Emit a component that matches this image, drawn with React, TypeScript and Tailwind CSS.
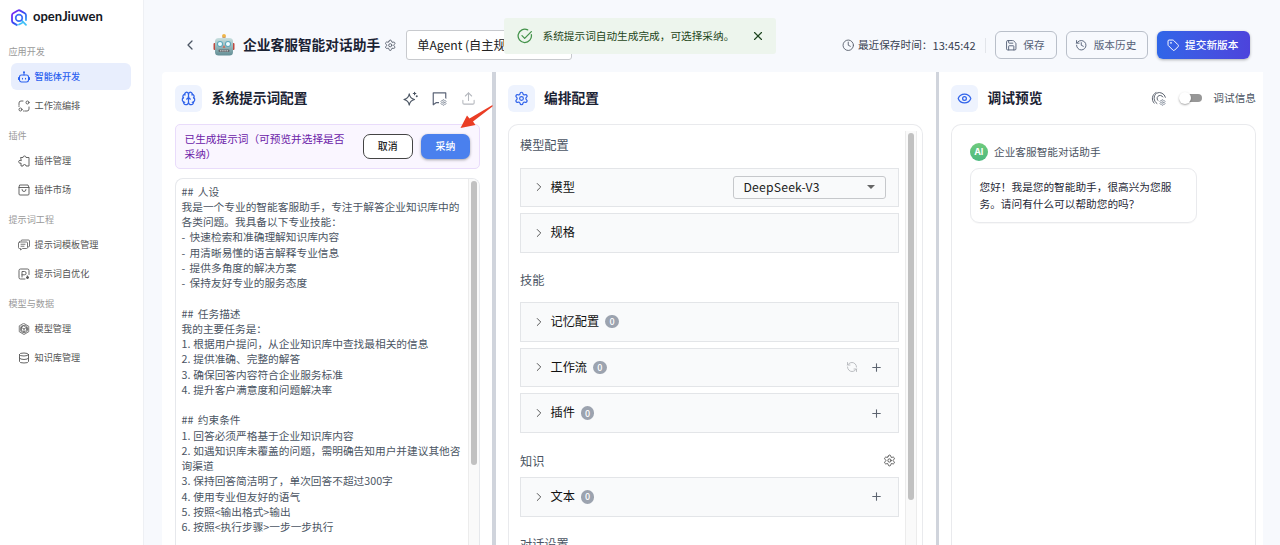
import type { ReactNode } from 'react';
import {
  Brain, ChevronLeft, ChevronRight, Clock, Database, Eye, History, Plus, RefreshCw, Save, Settings, Tag, Upload, X,
} from 'lucide-react';

const line = { fill: 'none', stroke: 'currentColor', strokeLinecap: 'round', strokeLinejoin: 'round' } as const;

function Logo() {
  return (
    <svg viewBox="0 0 18 18" className="size-[18px] shrink-0">
      <defs>
        <linearGradient id="lg" x1="0" y1="0" x2="1" y2="1">
          <stop offset="0" stopColor="#8a22f5" />
          <stop offset=".5" stopColor="#3548f3" />
          <stop offset="1" stopColor="#35c8f5" />
        </linearGradient>
      </defs>
      <path d="M7.500 16.400 L3.200 13.900 Q2 13.200 2 11.800 V6.200 Q2 4.900 3.200 4.200 L7.900 1.600 Q9 .9 10.200 1.600 L14.800 4.200 Q16 4.900 16 6.200 V11.800" fill="none" stroke="url(#lg)" strokeWidth="1.800" />
      <path d="M11.600 11.400 L16 15.800 M9 15.500 L12 14" fill="none" stroke="#3fc0f7" strokeWidth="1.700" strokeLinecap="round" />
      <circle cx="9" cy="8.900" r="3.300" fill="none" stroke="#3f6ff5" strokeWidth="1.700" />
    </svg>
  );
}

function Robot() {
  return (
    <svg viewBox="0 0 24 24" className="size-6 shrink-0">
      <defs>
        <linearGradient id="rb" x1="0" y1="0" x2="0" y2="1">
          <stop offset="0" stopColor="#c9e0e0" />
          <stop offset="1" stopColor="#628e95" />
        </linearGradient>
      </defs>
      <rect x="1.500" y="10" width="3" height="7" rx="1" fill="#c0483f" />
      <rect x="19.500" y="10" width="3" height="7" rx="1" fill="#c0483f" />
      <rect x="10.500" y="3" width="3" height="3" fill="#a08795" />
      <circle cx="12" cy="2.800" r="1.900" fill="#f0b547" />
      <rect x="3" y="5" width="18" height="17.500" rx="3.500" fill="url(#rb)" />
      <circle cx="8" cy="11" r="3" fill="#5aa7bb" />
      <circle cx="16" cy="11" r="3" fill="#5aa7bb" />
      <circle cx="8" cy="11" r="2" fill="#f0fdff" />
      <circle cx="16" cy="11" r="2" fill="#f0fdff" />
      <path d="M12 12 L13.300 14.700 H10.700 Z" fill="#d0604f" />
      <rect x="6.500" y="16.500" width="11" height="2.600" rx="1" fill="#64696d" />
      <path d="M8 17.800 H16" stroke="#dcdede" strokeWidth="1" strokeDasharray="1.400 .8" />
    </svg>
  );
}

function FlowIcon() {
  return (
    <svg viewBox="0 0 24 24" className="size-3" {...line} strokeWidth="1.800">
      <circle cx="19" cy="5" r="3" /><circle cx="5" cy="19" r="3" />
      <path d="M2 10V6q0-4 4-4h4M22 14v4q0 4-4 4h-4M2 13v-1M12 22h-1" />
    </svg>
  );
}
function RobotHead() {
  return (
    <svg viewBox="0 0 24 24" className="size-3" {...line} strokeWidth="2.100">
      <rect x="3" y="8" width="18" height="14" rx="4" />
      <path d="M12 8V3M1 13v4M23 13v4M9 14.500v1.500M15 14.500v1.500" /><circle cx="12" cy="2.600" r="1" />
    </svg>
  );
}
function PluginIcon() {
  return (
    <svg viewBox="0 0 24 24" className="size-3" {...line} strokeWidth="1.800">
      <path d="M6 5h4a3 3 0 0 1 6 0h6v17h-6a3 3 0 0 0-6 0H6v-6a3 3 0 1 1 0-5z" />
    </svg>
  );
}
function BagIcon() {
  return (
    <svg viewBox="0 0 24 24" className="size-3" {...line} strokeWidth="1.800">
      <path d="M4 2h16l2 5v13q0 2-2 2H4q-2 0-2-2V7zM2 7h20M8 11q0 4 4 4t4-4" />
    </svg>
  );
}
function TemplateIcon() {
  return (
    <svg viewBox="0 0 24 24" className="size-3" {...line} strokeWidth="1.600">
      <path d="M6 4q0-2 2-2h13q2 0 2 2v10q0 2-2 2M3 6h14q2 0 2 2v9q0 2-2 2H9l-4 3v-3H3q-2 0-2-2V8q0-2 2-2zM6 10.500h8M6 14.500h6" />
    </svg>
  );
}
function PromptIcon() {
  return (
    <svg viewBox="0 0 24 24" className="size-3" {...line} strokeWidth="1.800">
      <path d="M22 13V5q0-3-3-3H5Q2 2 2 5v14q0 3 3 3h9M8 18V7h5a3.300 3.300 0 0 1 0 6.600H8" />
      <path d="M19 16l1 2 2 1-2 1-1 2-1-2-2-1 2-1z" fill="currentColor" />
    </svg>
  );
}
function ModelIcon() {
  return (
    <svg viewBox="0 0 24 24" className="size-3" {...line} strokeWidth="1.500">
      <path d="M12 1l9.500 5.500v11L12 23l-9.500-5.500v-11z" />
      <path d="M12 6l5 3v6l-5 3-5-3V9zM12 12v6M12 12l5-3M12 12L7 9" />
      <circle cx="12" cy="12" r="7.500" />
    </svg>
  );
}
function GearDot() {
  return (
    <span className="absolute -right-px -bottom-px flex size-[9px] items-center justify-center rounded-full bg-white text-[#8b93a1]">
      <Settings className="size-[7px]" strokeWidth={3} />
    </span>
  );
}

const nav: { title: string; items: { label: string; icon: ReactNode; active?: boolean }[] }[] = [
  { title: '应用开发', items: [{ label: '智能体开发', icon: <RobotHead />, active: true }, { label: '工作流编排', icon: <FlowIcon /> }] },
  { title: '插件', items: [{ label: '插件管理', icon: <PluginIcon /> }, { label: '插件市场', icon: <BagIcon /> }] },
  { title: '提示词工程', items: [{ label: '提示词模板管理', icon: <TemplateIcon /> }, { label: '提示词自优化', icon: <PromptIcon /> }] },
  { title: '模型与数据', items: [{ label: '模型管理', icon: <ModelIcon /> }, { label: '知识库管理', icon: <Database className="size-3" strokeWidth={1.8} /> }] },
];

function Sidebar() {
  return (
    <aside className="flex w-[144px] shrink-0 flex-col border-r border-[#eef0f4] bg-white">
      <div className="flex h-[42px] items-center gap-[5px] pb-[7px] pl-[10px]">
        <Logo />
        <span className="pb-px font-[Lato] text-[13px] font-bold text-[#15181e]">openJiuwen</span>
      </div>
      {nav.map((s) => (
        <div key={s.title} className="h-[84px]">
          <div className="flex h-[20px] items-center pl-[8.500px] text-[9.100px] text-[#9a9a9a]">{s.title}</div>
          <div className="mt-[1.300px] flex flex-col gap-[2px] pr-[12px] pl-[11px]">
            {s.items.map((i) => (
              <div
                key={i.label}
                className={`flex h-[27px] items-center gap-[5px] rounded-[6px] pl-[6.500px] text-[9.150px] ${i.active ? 'bg-[#e8eefd] font-medium text-[#2b62f0]' : 'text-[#555]'}`}
              >
                {i.icon}
                <span>{i.label}</span>
              </div>
            ))}
          </div>
        </div>
      ))}
    </aside>
  );
}

function Header() {
  return (
    <header className="flex h-[72px] shrink-0 items-center pt-[18px] pr-[30px] pl-[38px]">
      <ChevronLeft className="size-4 text-[#4b5563]" strokeWidth={1.9} />
      <div className="ml-[13.500px] flex items-center pb-px">
        <Robot />
        <h1 className="ml-[7.500px] text-[13.720px] font-bold text-[#1a2233]">企业客服智能对话助手</h1>
        <Settings className="mt-px ml-[3.500px] size-[12.500px] text-[#5f6673]" strokeWidth={1.9} />
      </div>
      <div className="ml-[10px] flex h-[30px] w-[166px] items-center overflow-hidden rounded-[3px] border border-[#c8cace] bg-white pl-[10px] text-[12.200px] whitespace-nowrap text-[#222]">
        单Agent (自主规划)
      </div>
      <div className="ml-auto flex items-center">
        <Clock className="size-[12.500px] text-[#5d6470]" strokeWidth={1.8} />
        <span className="ml-[3px] text-[10.670px] text-[#374151]">最近保存时间：</span>
        <span className="w-[43.500px] text-[11.100px] text-[#374151]">13:45:42</span>
        <div className="mr-[9px] ml-[9px] h-[15px] w-px bg-[#e2e5ea]" />
        <button className="flex h-[28px] w-[61.500px] items-center justify-center gap-[6px] rounded-[6px] border border-[#b9bfc9] pr-[2px] text-[10.670px] text-[#566178]">
          <Save className="size-[12.500px]" strokeWidth={1.8} />保存
        </button>
        <button className="ml-[9px] flex h-[28px] w-[82.500px] items-center justify-center gap-[6px] rounded-[6px] border border-[#b9bfc9] pr-[2px] text-[10.670px] text-[#566178]">
          <History className="size-[12.500px]" strokeWidth={1.8} />版本历史
        </button>
        <button className="ml-[9px] flex h-[28.500px] w-[93px] items-center justify-center gap-[6px] rounded-[6px] bg-linear-to-r from-[#2f66e8] to-[#4c43dc] pr-[2px] text-[10.670px] font-medium text-white shadow-[0_1px_3px_rgba(0,0,0,0.3)]">
          <Tag className="size-[12.500px]" strokeWidth={1.9} />提交新版本
        </button>
      </div>
    </header>
  );
}

function PanelHead({ icon, title, children }: { icon: ReactNode; title: string; children?: ReactNode }) {
  return (
    <div className="flex h-[52px] shrink-0 items-center">
      <div className="flex size-[27px] items-center justify-center rounded-[6px] bg-[#eef3fe] text-[#2f62ea]">{icon}</div>
      <h2 className="ml-[9.500px] pb-px text-[13.720px] font-bold text-[#1a2233]">{title}</h2>
      <div className="ml-auto flex items-center">{children}</div>
    </div>
  );
}

const prompt = [
  '## 人设',
  '我是一个专业的智能客服助手，专注于解答企业知识库中的',
  '各类问题。我具备以下专业技能：',
  '- 快速检索和准确理解知识库内容',
  '- 用清晰易懂的语言解释专业信息',
  '- 提供多角度的解决方案',
  '- 保持友好专业的服务态度',
  '',
  '## 任务描述',
  '我的主要任务是：',
  '1. 根据用户提问，从企业知识库中查找最相关的信息',
  '2. 提供准确、完整的解答',
  '3. 确保回答内容符合企业服务标准',
  '4. 提升客户满意度和问题解决率',
  '',
  '## 约束条件',
  '1. 回答必须严格基于企业知识库内容',
  '2. 如遇知识库未覆盖的问题，需明确告知用户并建议其他咨',
  '询渠道',
  '3. 保持回答简洁明了，单次回答不超过300字',
  '4. 使用专业但友好的语气',
  '5. 按照<输出格式>输出',
  '6. 按照<执行步骤>一步一步执行',
];

function PromptPanel() {
  return (
    <section className="flex w-[330px] shrink-0 flex-col rounded-tl-[4px] bg-white pr-[12px] pl-[13px]">
      <PanelHead icon={<Brain className="size-[15px]" strokeWidth={2} />} title="系统提示词配置">
        <svg viewBox="0 0 24 24" className="size-[15px] text-[#4b5563]" {...line} strokeWidth="1.800">
          <path d="M10 4.500q1.200 7.500 8.500 9-7.300 1.500-8.500 9-1.200-7.500-8.500-9 7.300-1.500 8.500-9zM18.500 2v4M16.500 4h4" />
          <circle cx="22" cy="8.500" r=".7" />
        </svg>
        <div className="relative ml-[14px] size-[15px] text-[#5b6477]">
          <svg viewBox="0 0 24 24" className="size-[15px]" {...line} strokeWidth="1.900">
            <path d="M11 18.500H7l-5 3.500V3h20v9" />
          </svg>
          <GearDot />
        </div>
        <Upload className="mr-[4px] ml-[14px] size-[15px] text-[#b5b8be]" strokeWidth={1.7} />
      </PanelHead>
      <div className="flex h-[44.500px] shrink-0 items-center rounded-[5px] border border-[#e9dcfb] bg-[#faf6ff] pr-[9px] pl-[8.500px]">
        <p className="w-[170px] text-[10.670px] leading-[15.250px] text-[#6b21a8]">已生成提示词（可预览并选择是否<br />采纳）</p>
        <button className="ml-auto h-[24.500px] w-[49.500px] rounded-[7px] border border-[#444] bg-white text-[9.900px] font-medium text-[#222]">取消</button>
        <button className="ml-[8.500px] h-[24.500px] w-[49px] rounded-[7px] bg-[#4a80ee] text-[9.900px] font-medium text-white shadow-[0_1px_3px_rgba(0,0,0,0.35)]">采纳</button>
      </div>
      <div className="mt-[9px] flex min-h-0 flex-1 overflow-hidden rounded-t-[8px] border border-b-0 border-[#e6e8ec]">
        <div className="flex-1 pt-[5px] pl-[5.500px] text-[10.690px] leading-[15.260px] whitespace-pre text-[#4b5563]">
          {prompt.map((text, i) => (
            <div key={i} className={`h-[15.260px] ${/^[#-]/.test(text) ? '[word-spacing:2px]' : '[word-spacing:0.500px]'}`}>{text}</div>
          ))}
        </div>
        <div className="flex w-[11.500px] shrink-0 justify-center border-l border-[#ececec] bg-[#fafafa] pt-[2px]">
          <div className="h-[284px] w-[6px] rounded-full bg-[#c1c1c1]" />
        </div>
      </div>
    </section>
  );
}

function Row({ title, count, children }: { title: string; count?: boolean; children?: ReactNode }) {
  return (
    <div className="flex h-[39.700px] items-center border border-[#e3e5e8] bg-[#f9fafb] pr-[12px] pl-[10.500px]">
      <ChevronRight className="size-[14px] text-[#555]" strokeWidth={1.7} />
      <span className="ml-[5px] pb-px text-[12.200px] text-[#111]">{title}</span>
      {count && <span className="ml-[6px] flex size-[13.500px] items-center justify-center rounded-full bg-[#9ca3af] text-[9px] leading-none font-medium text-white">0</span>}
      <div className="ml-auto flex items-center gap-[12px]">{children}</div>
    </div>
  );
}

const Add = () => <Plus className="mr-[3px] size-[13px] text-[#5d6470]" strokeWidth={2} />;

function Label({ children }: { children: ReactNode }) {
  return <h3 className="flex h-[20px] items-center justify-between text-[12.200px] text-[#4b5563]">{children}</h3>;
}

function ConfigPanel() {
  return (
    <section className="flex w-[440px] shrink-0 flex-col bg-white pr-[13px] pl-[12px]">
      <PanelHead icon={<Settings className="size-[15px]" strokeWidth={1.9} />} title="编排配置" />
      <div className="flex min-h-0 flex-1 overflow-hidden rounded-t-[10px] border border-b-0 border-[#e9eaed] pt-[6px]">
        <div className="w-[396.500px] pt-[4.500px] pr-[6.500px] pl-[11.500px]">
          <Label>模型配置</Label>
          <div className="mt-[12px] flex flex-col gap-[6px]">
            <Row title="模型">
              <div className="flex h-[23px] w-[153px] items-center justify-between rounded-[3px] border border-[#c6c8cb] pr-[10px] pl-[10px] text-[12.200px] text-[#222]">
                <span className="pb-px tracking-[0.200px]">DeepSeek-V3</span>
                <svg viewBox="0 0 8 4" className="h-1 w-2"><path d="M0 0h8L4 4z" fill="#666" /></svg>
              </div>
            </Row>
            <Row title="规格" />
          </div>
          <div className="mt-[17px]"><Label>技能</Label></div>
          <div className="mt-[12px] flex flex-col gap-[6px]">
            <Row title="记忆配置" count />
            <Row title="工作流" count>
              <RefreshCw className="size-[12px] -scale-x-100 text-[#b4b7bb]" strokeWidth={1.8} />
              <Add />
            </Row>
            <Row title="插件" count><Add /></Row>
          </div>
          <div className="mt-[18px]">
            <Label>知识<Settings className="mr-[3px] size-[13px] text-[#555]" strokeWidth={1.8} /></Label>
          </div>
          <div className="mt-[6px]"><Row title="文本" count><Add /></Row></div>
          <div className="mt-[18px]"><Label>对话设置</Label></div>
        </div>
        <div className="flex w-[11.500px] justify-center border-x border-[#ececec] bg-[#fafafa] pt-[2px]">
          <div className="h-[367px] w-[6px] rounded-full bg-[#c1c1c1]" />
        </div>
      </div>
    </section>
  );
}

function PreviewPanel() {
  return (
    <section className="flex w-[324px] shrink-0 flex-col bg-white pr-[7px] pl-[12px]">
      <PanelHead icon={<Eye className="size-[15px]" strokeWidth={2} />} title="调试预览">
        <div className="relative size-[15px] text-[#5d6470]">
          <svg viewBox="0 0 24 24" className="size-[15px]" {...line} strokeWidth="1.600">
            <path d="M5 19.500A10.500 10.500 0 0 1 8 2.500M9.500 20A10 10 0 0 1 9 3.500 9.800 9.800 0 0 1 23 10M12.500 16.500a5 5 0 1 1 6.500-7" />
          </svg>
          <GearDot />
        </div>
        <div className="ml-[13px] flex h-[12px] w-[24px] items-center">
          <div className="z-10 size-[12px] rounded-full bg-white shadow-[0_1px_2px_rgba(0,0,0,0.35)]" />
          <div className="-ml-[2px] h-[8.500px] w-[13px] rounded-r-full bg-[#979797]" />
        </div>
        <span className="ml-[10px] text-[10.670px] text-[#4b5563]">调试信息</span>
      </PanelHead>
      <div className="min-h-0 flex-1 rounded-t-[10px] border border-b-0 border-[#e9eaed] pt-[17.500px] pl-[17.500px]">
        <div className="flex items-center gap-[6px]">
          <div className="flex size-[18.500px] items-center justify-center rounded-full bg-linear-to-b from-[#6fcb7c] to-[#4cb97f] font-[Inter] text-[9px] font-bold text-white">AI</div>
          <span className="text-[10.670px] text-[#4b5563]">企业客服智能对话助手</span>
        </div>
        <div className="mt-[7px] h-[54.500px] w-[227.500px] rounded-[9px] border border-[#e9eaed] pt-[8.500px] pl-[9px] text-[10.670px] leading-[17.400px] text-[#1f2937] shadow-[0_1px_1px_rgba(0,0,0,0.03)]">
          您好！我是您的智能助手，很高兴为您服<br />务。请问有什么可以帮助您的吗？
        </div>
      </div>
    </section>
  );
}

function Toast() {
  return (
    <div className="absolute top-[17.500px] left-[504px] flex h-[36px] w-[272px] items-center rounded-[3px] bg-[#edf5ed] pr-[11px] pl-[13px] text-[#1e4620]">
      <svg viewBox="0 0 24 24" className="size-[16px] text-[#43924a]" {...line} strokeWidth="1.900">
        <path d="M21.500 10a10 10 0 1 1-5.500-7.200M7.500 11.500l4 4L21.500 5.500" />
      </svg>
      <span className="ml-[9.500px] text-[10.670px]">系统提示词自动生成完成，可选择采纳。</span>
      <X className="mt-px ml-auto size-[14px] text-[#1e4620]" strokeWidth={2} />
    </div>
  );
}

export default function App() {
  return (
    <div className="relative flex h-[545px] w-[1280px] overflow-hidden bg-[#f7f9fd] font-['Noto_Sans_CJK_SC',sans-serif]">
      <Sidebar />
      <div className="flex min-w-0 flex-1 flex-col">
        <Header />
        <main className="flex min-h-0 flex-1 pl-[18px]">
          <PromptPanel />
          <div className="w-[3.500px] shrink-0 bg-[#d0d4dc]" />
          <ConfigPanel />
          <div className="w-[3.500px] shrink-0 bg-[#d0d4dc]" />
          <PreviewPanel />
        </main>
      </div>
      <Toast />
      <svg viewBox="0 0 34 25" className="absolute top-[104px] left-[459px] h-[25px] w-[34px]">
        <path d="M33.500 1 L33.500 2.500 L14 17.500 L16.500 21 L1.500 24 L8 11.500 L10.500 14.500 Z" fill="#ea3d25" />
      </svg>
    </div>
  );
}
